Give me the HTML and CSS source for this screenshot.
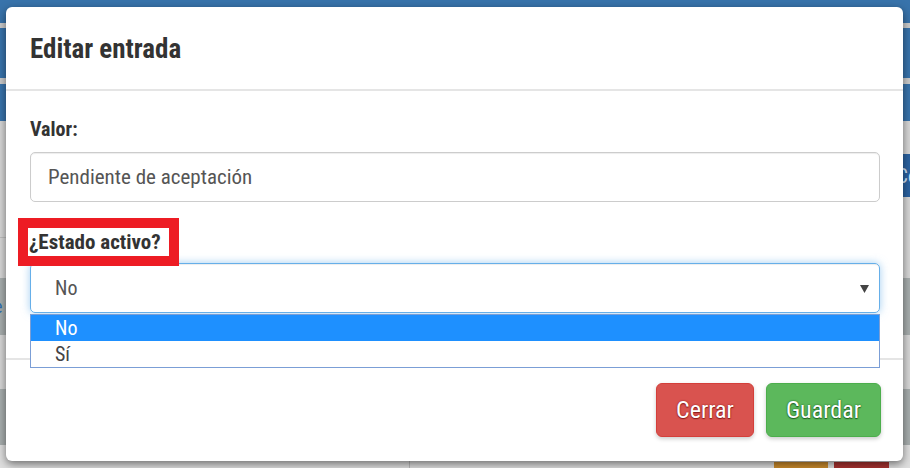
FILE: index.html
```html
<!DOCTYPE html>
<html lang="es">
<head>
<meta charset="utf-8">
<title>Editar entrada</title>
<link rel="stylesheet" href="styles.css">
</head>
<body>
<div class="page">
  <div class="band blue h23"></div>
  <div class="band bar h5"></div>
  <div class="band blue h50"></div>
  <div class="band bar h6"></div>
  <div class="band blue h37"></div>
  <div class="band light h33"></div>
  <div class="band split h43">
    <div class="cell light"></div>
    <div class="cell navy"><span class="peek-right">Co</span></div>
  </div>
  <div class="band split h81">
    <div class="cell light lined"></div>
    <div class="cell light"></div>
  </div>
  <div class="band dark h57"><span class="peek-left">e</span></div>
  <div class="band light h54"></div>
  <div class="band dark h56"></div>
  <div class="band split foot">
    <div class="cell pale vline"></div>
    <div class="cell pale actions-bg">
      <span class="bgbtn orange"></span>
      <span class="bgbtn red"></span>
    </div>
  </div>
</div>

<div class="modal">
  <div class="modal-header">
    <h4 class="modal-title">Editar entrada</h4>
  </div>
  <div class="modal-body">
    <label class="lbl">Valor:</label>
    <div class="input">Pendiente de aceptación</div>
    <label class="lbl highlight">¿Estado activo?</label>
    <div class="select-wrap">
      <div class="select">
        <span>No</span>
        <svg class="caret" width="9" height="9" viewBox="0 0 9 9"><polygon points="0,1 9,1 4.5,9" fill="#444"/></svg>
      </div>
      <ul class="options">
        <li class="opt selected">No</li>
        <li class="opt">Sí</li>
      </ul>
    </div>
  </div>
  <div class="modal-footer">
    <button class="btn btn-danger">Cerrar</button>
    <button class="btn btn-success">Guardar</button>
  </div>
</div>
</body>
</html>
```
FILE: styles.css
```css
* { box-sizing: border-box; }
html, body { margin: 0; padding: 0; }
body {
  width: 910px;
  height: 468px;
  overflow: hidden;
  position: relative;
  font-family: "Roboto Condensed", Roboto, "Liberation Sans", sans-serif;
  font-stretch: condensed;
  background: #dcdcdc;
}

/* background page */
.page { display: flex; flex-direction: column; width: 910px; height: 468px; }
.band { width: 100%; flex: none; }
.blue { background: #3873ab; }
.bar { background: #cbcbcb; }
.light { background: #d6d6d6; }
.dark { background: #a7adad; }
.navy { background: #2b62a0; }
.pale { background: #dedede; }
.split { display: flex; }
.cell { flex: 1; position: relative; }
.lined { background: linear-gradient(#d6d6d6 40px, #bdbdbd 40px, #bdbdbd 41px, #d6d6d6 41px); }
.h5 { height: 5px; } .h6 { height: 6px; } .h23 { height: 23px; }
.h33 { height: 33px; } .h37 { height: 37px; } .h43 { height: 43px; }
.h50 { height: 50px; } .h54 { height: 54px; } .h56 { height: 56px; }
.h57 { height: 57px; } .h81 { height: 81px; }
.foot { flex: 1; }
.vline { flex: none; width: 410px; border-right: 1px solid #b9b9b9; }
.actions-bg { display: flex; justify-content: flex-end; align-items: flex-end; gap: 6px; padding-right: 21px; }
.bgbtn { width: 54px; height: 6px; display: block; }
.bgbtn.orange { background: #c98a2c; }
.bgbtn.red { background: #a83330; width: 55px; }
.dark { display: flex; align-items: center; }
.peek-left { color: #2d6cb0; font-size: 18px; margin-left: -6px; }
.cell.navy { display: flex; align-items: center; justify-content: flex-end; }
.peek-right { color: #cfe3f7; font-size: 20px; margin-right: -8px; }

/* modal */
.modal {
  position: absolute;
  left: 6px;
  top: 7px;
  width: 897px;
  height: 454px;
  background: #fff;
  border-radius: 6px;
  box-shadow: 0 3px 9px rgba(0,0,0,0.5);
  display: flex;
  flex-direction: column;
}
.modal-header {
  height: 84px;
  border-bottom: 2px solid #e5e5e5;
  padding: 0 23px 0 24px;
  display: flex;
  align-items: center;
}
.modal-title {
  margin: 0;
  font-size: 27px;
  font-weight: 700;
  color: #333;
  line-height: 32px;
  padding-top: 1px;
}
.modal-body {
  padding: 27px 23px 0 24px;
  height: 267px;
  display: flex;
  flex-direction: column;
  align-items: flex-start;
}
.lbl {
  display: block;
  font-size: 20px;
  font-weight: 700;
  color: #333;
  line-height: 22px;
}
.input {
  margin-top: 12px;
  width: 100%;
  height: 50px;
  border: 1px solid #ccc;
  border-radius: 5px;
  box-shadow: inset 0 1px 1px rgba(0,0,0,0.075);
  padding-left: 17px;
  display: flex;
  align-items: center;
  font-size: 21px;
  color: #555;
}
.lbl.highlight {
  margin-top: 26px;
  font-size: 21px;
  line-height: 28px;
  background: #fff;
  outline: 10px solid #ed1c24;
  position: relative;
  z-index: 2;
  margin-left: -2px;
  padding-left: 1px;
  padding-right: 8px;
}
.select-wrap {
  margin-top: 7px;
  width: 100%;
  position: relative;
}
.select {
  height: 50px;
  border: 1px solid #66afe9;
  border-radius: 5px;
  box-shadow: inset 0 1px 1px rgba(0,0,0,0.075), 0 0 8px rgba(102,175,233,0.6);
  padding: 0 10px 0 24px;
  display: flex;
  align-items: center;
  justify-content: space-between;
  font-size: 20px;
  color: #555;
}
.caret { margin-top: 1px; }
.options {
  position: absolute;
  left: 0;
  right: 0;
  top: 51px;
  margin: 0;
  padding: 0;
  list-style: none;
  background: #fff;
  border: 1px solid #7b9ed6;
  z-index: 3;
}
.opt {
  height: 26px;
  line-height: 26px;
  padding-left: 24px;
  font-size: 20px;
  color: #444;
}
.opt.selected { background: #1e90ff; color: #fff; }

.modal-footer {
  border-top: 2px solid #e5e5e5;
  padding: 23px 22px 24px 24px;
  display: flex;
  justify-content: flex-end;
  gap: 12px;
}
.btn {
  height: 54px;
  padding: 0 19px;
  border-radius: 6px;
  font-family: inherit;
  font-stretch: condensed;
  font-size: 24px;
  color: #fff;
  cursor: pointer;
  box-shadow: 0 2px 4px rgba(0,0,0,0.2);
}
.btn-danger {
  background: #d9534f;
  border: 1px solid #d43f3a;
  text-shadow: 0 0 2px #8a1c1a, 0 1px 1px #8a1c1a;
}
.btn-success {
  background: #5cb85c;
  border: 1px solid #4cae4c;
  text-shadow: 0 0 2px #1f5e1f, 0 1px 1px #1f5e1f;
}
```
